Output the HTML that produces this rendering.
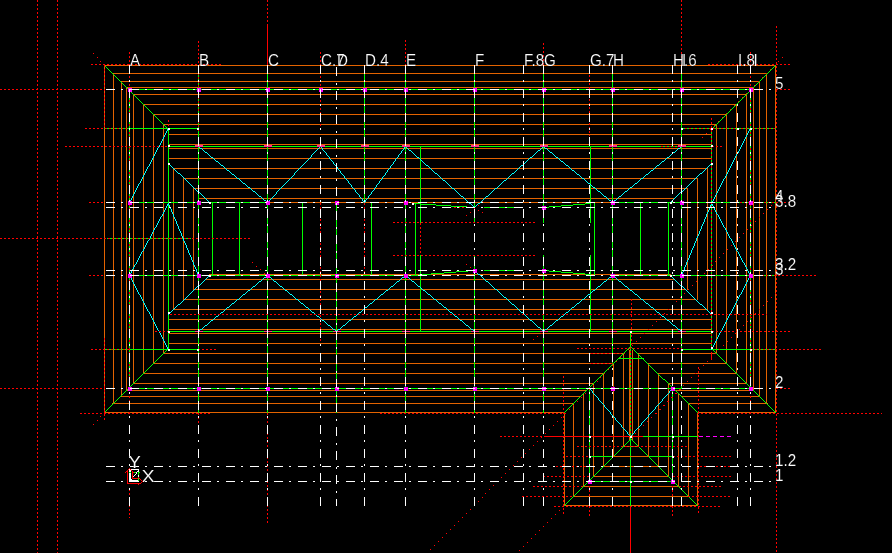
<!DOCTYPE html>
<html><head><meta charset="utf-8"><title>Roof framing plan</title>
<style>
html,body{margin:0;padding:0;background:#000;overflow:hidden}
svg{display:block}
svg line,svg path{shape-rendering:crispEdges;fill:none}
svg rect{shape-rendering:crispEdges}
svg text{font-family:"Liberation Sans",sans-serif;fill:#fff;stroke:#000;stroke-width:.15px}
#grid,#ucs{opacity:.999}
</style></head><body>
<svg width="892" height="553" viewBox="0 0 892 553">
<rect width="892" height="553" fill="#000"/>
<g id="rafters">
<line x1="104" y1="65.5" x2="776" y2="65.5" stroke="#e36300"/>
<line x1="104" y1="412.5" x2="565" y2="412.5" stroke="#e36300"/>
<line x1="697" y1="412.5" x2="776" y2="412.5" stroke="#e36300"/>
<line x1="112" y1="73.5" x2="768" y2="73.5" stroke="#e36300"/>
<line x1="112" y1="403.5" x2="574" y2="403.5" stroke="#e36300"/>
<line x1="688" y1="403.5" x2="768" y2="403.5" stroke="#e36300"/>
<line x1="120" y1="81.5" x2="760" y2="81.5" stroke="#e36300"/>
<line x1="120" y1="396.5" x2="581" y2="396.5" stroke="#e36300"/>
<line x1="681" y1="396.5" x2="760" y2="396.5" stroke="#e36300"/>
<line x1="126" y1="87.5" x2="754" y2="87.5" stroke="#e36300"/>
<line x1="126" y1="390.5" x2="587" y2="390.5" stroke="#e36300"/>
<line x1="675" y1="390.5" x2="754" y2="390.5" stroke="#e36300"/>
<line x1="133" y1="94.5" x2="747" y2="94.5" stroke="#e36300"/>
<line x1="133" y1="383.5" x2="594" y2="383.5" stroke="#e36300"/>
<line x1="668" y1="383.5" x2="747" y2="383.5" stroke="#e36300"/>
<line x1="143" y1="104.5" x2="737" y2="104.5" stroke="#e36300"/>
<line x1="143" y1="373.5" x2="604" y2="373.5" stroke="#e36300"/>
<line x1="658" y1="373.5" x2="737" y2="373.5" stroke="#e36300"/>
<line x1="153" y1="114.5" x2="727" y2="114.5" stroke="#e36300"/>
<line x1="153" y1="363.5" x2="614" y2="363.5" stroke="#e36300"/>
<line x1="648" y1="363.5" x2="727" y2="363.5" stroke="#e36300"/>
<line x1="163" y1="124.5" x2="717" y2="124.5" stroke="#e36300"/>
<line x1="163" y1="353.5" x2="624" y2="353.5" stroke="#e36300"/>
<line x1="638" y1="353.5" x2="717" y2="353.5" stroke="#e36300"/>
<line x1="168" y1="134.5" x2="712" y2="134.5" stroke="#e36300"/>
<line x1="168" y1="343.5" x2="712" y2="343.5" stroke="#e36300"/>
<line x1="168" y1="144.5" x2="712" y2="144.5" stroke="#e36300"/>
<line x1="168" y1="333.5" x2="712" y2="333.5" stroke="#e36300"/>
<line x1="168" y1="148.5" x2="712" y2="148.5" stroke="#e36300"/>
<line x1="168" y1="329.5" x2="712" y2="329.5" stroke="#e36300"/>
<line x1="168" y1="158.5" x2="712" y2="158.5" stroke="#e36300"/>
<line x1="168" y1="319.5" x2="712" y2="319.5" stroke="#e36300"/>
<line x1="173" y1="168.5" x2="708" y2="168.5" stroke="#e36300"/>
<line x1="173" y1="309.5" x2="707" y2="309.5" stroke="#e36300"/>
<line x1="183" y1="178.5" x2="698" y2="178.5" stroke="#e36300"/>
<line x1="184" y1="299.5" x2="696" y2="299.5" stroke="#e36300"/>
<line x1="193" y1="188.5" x2="688" y2="188.5" stroke="#e36300"/>
<line x1="195" y1="289.5" x2="685" y2="289.5" stroke="#e36300"/>
<line x1="198" y1="198.5" x2="674" y2="198.5" stroke="#e36300"/>
<line x1="206" y1="279.5" x2="674" y2="279.5" stroke="#e36300"/>
<line x1="209" y1="202.5" x2="671" y2="202.5" stroke="#e36300"/>
<line x1="209" y1="274.5" x2="671" y2="274.5" stroke="#e36300"/>
<line x1="104.5" y1="65" x2="104.5" y2="413" stroke="#e36300"/>
<line x1="775.5" y1="65" x2="775.5" y2="413" stroke="#e36300"/>
<line x1="113.5" y1="74" x2="113.5" y2="404" stroke="#e36300"/>
<line x1="766.5" y1="74" x2="766.5" y2="404" stroke="#e36300"/>
<line x1="121.5" y1="82" x2="121.5" y2="396" stroke="#e36300"/>
<line x1="759.5" y1="82" x2="759.5" y2="396" stroke="#e36300"/>
<line x1="126.5" y1="87" x2="126.5" y2="391" stroke="#e36300"/>
<line x1="753.5" y1="87" x2="753.5" y2="391" stroke="#e36300"/>
<line x1="133.5" y1="94" x2="133.5" y2="384" stroke="#e36300"/>
<line x1="746.5" y1="94" x2="746.5" y2="384" stroke="#e36300"/>
<line x1="143.5" y1="104" x2="143.5" y2="374" stroke="#e36300"/>
<line x1="736.5" y1="104" x2="736.5" y2="374" stroke="#e36300"/>
<line x1="153.5" y1="114" x2="153.5" y2="364" stroke="#e36300"/>
<line x1="726.5" y1="114" x2="726.5" y2="364" stroke="#e36300"/>
<line x1="163.5" y1="124" x2="163.5" y2="354" stroke="#e36300"/>
<line x1="716.5" y1="124" x2="716.5" y2="354" stroke="#e36300"/>
<line x1="173.5" y1="168" x2="173.5" y2="310" stroke="#e36300"/>
<line x1="707.5" y1="168" x2="707.5" y2="310" stroke="#e36300"/>
<line x1="183.5" y1="178" x2="183.5" y2="300" stroke="#e36300"/>
<line x1="697.5" y1="178" x2="697.5" y2="300" stroke="#e36300"/>
<line x1="193.5" y1="188" x2="193.5" y2="290" stroke="#e36300"/>
<line x1="687.5" y1="188" x2="687.5" y2="290" stroke="#e36300"/>
<line x1="573.5" y1="403" x2="573.5" y2="497" stroke="#e36300"/>
<line x1="583.5" y1="393" x2="583.5" y2="487" stroke="#e36300"/>
<line x1="593.5" y1="383" x2="593.5" y2="477" stroke="#e36300"/>
<line x1="603.5" y1="373" x2="603.5" y2="467" stroke="#e36300"/>
<line x1="613.5" y1="363" x2="613.5" y2="457" stroke="#e36300"/>
<line x1="623.5" y1="353" x2="623.5" y2="447" stroke="#e36300"/>
<line x1="638.5" y1="354" x2="638.5" y2="447" stroke="#e36300"/>
<line x1="648.5" y1="364" x2="648.5" y2="457" stroke="#e36300"/>
<line x1="658.5" y1="374" x2="658.5" y2="467" stroke="#e36300"/>
<line x1="668.5" y1="384" x2="668.5" y2="477" stroke="#e36300"/>
<line x1="678.5" y1="394" x2="678.5" y2="487" stroke="#e36300"/>
<line x1="688.5" y1="404" x2="688.5" y2="497" stroke="#e36300"/>
<line x1="629.5" y1="350" x2="629.5" y2="440" stroke="#e36300"/>
<line x1="632.5" y1="350" x2="632.5" y2="440" stroke="#e36300"/>
<line x1="564.5" y1="412" x2="564.5" y2="506" stroke="#e36300"/>
<line x1="697.5" y1="412" x2="697.5" y2="506" stroke="#e36300"/>
<line x1="623" y1="446.5" x2="639" y2="446.5" stroke="#e36300"/>
<line x1="613" y1="456.5" x2="649" y2="456.5" stroke="#e36300"/>
<line x1="603" y1="466.5" x2="659" y2="466.5" stroke="#e36300"/>
<line x1="593" y1="476.5" x2="669" y2="476.5" stroke="#e36300"/>
<line x1="583" y1="486.5" x2="679" y2="486.5" stroke="#e36300"/>
<line x1="573" y1="496.5" x2="689" y2="496.5" stroke="#e36300"/>
<line x1="564" y1="505.5" x2="698" y2="505.5" stroke="#e36300"/>
</g>
<g id="framing">
<path d="M104 65.5h1M105 66.5h1M106 67.5h1M107 68.5h1M108 69.5h1M109 70.5h1M110 71.5h1M111 72.5h1M112 73.5h1M113 74.5h1M114 75.5h1M115 76.5h1M116 77.5h1M117 78.5h1M118 79.5h1M119 80.5h1M120 81.5h1M121 82.5h1M122 83.5h1M123 84.5h1M124 85.5h1M125 86.5h1M126 87.5h1M127 88.5h1M128 89.5h1M129 90.5h1M130 91.5h1M131 92.5h1M132 93.5h1M133 94.5h1M134 95.5h1M135 96.5h1M136 97.5h1M137 98.5h1M138 99.5h1M139 100.5h1M140 101.5h1M141 102.5h1M142 103.5h1M143 104.5h1M144 105.5h1M145 106.5h1M146 107.5h1M147 108.5h1M148 109.5h1M149 110.5h1M150 111.5h1M151 112.5h1M152 113.5h1M153 114.5h1M154 115.5h1M155 116.5h1M156 117.5h1M157 118.5h1M158 119.5h1M159 120.5h1M160 121.5h1M161 122.5h1M162 123.5h1M163 124.5h1M164 125.5h1M165 126.5h1M166 127.5h1M167 128.5h1" stroke="#00ff00"/>
<path d="M775 65.5h1M774 66.5h1M773 67.5h1M772 68.5h1M771 69.5h1M770 70.5h1M769 71.5h1M768 72.5h1M767 73.5h1M766 74.5h1M765 75.5h1M764 76.5h1M763 77.5h1M762 78.5h1M761 79.5h1M760 80.5h1M759 81.5h1M758 82.5h1M757 83.5h1M756 84.5h1M755 85.5h1M754 86.5h1M753 87.5h1M752 88.5h1M751 89.5h1M750 90.5h1M749 91.5h1M748 92.5h1M747 93.5h1M746 94.5h1M745 95.5h1M744 96.5h1M743 97.5h1M742 98.5h1M741 99.5h1M740 100.5h1M739 101.5h1M738 102.5h1M737 103.5h1M736 104.5h1M735 105.5h1M734 106.5h1M733 107.5h1M732 108.5h1M731 109.5h1M730 110.5h1M729 111.5h1M728 112.5h1M727 113.5h1M726 114.5h1M725 115.5h1M724 116.5h1M723 117.5h1M722 118.5h1M721 119.5h1M720 120.5h1M719 121.5h1M718 122.5h1M717 123.5h1M716 124.5h1M715 125.5h1M714 126.5h1M713 127.5h1M712 128.5h1" stroke="#00ff00"/>
<path d="M104 412.5h1M105 411.5h1M106 410.5h1M107 409.5h1M108 408.5h1M109 407.5h1M110 406.5h1M111 405.5h1M112 404.5h1M113 403.5h1M114 402.5h1M115 401.5h1M116 400.5h1M117 399.5h1M118 398.5h1M119 397.5h1M120 396.5h1M121 395.5h1M122 394.5h1M123 393.5h1M124 392.5h1M125 391.5h1M126 390.5h1M127 389.5h1M128 388.5h1M129 387.5h1M130 386.5h1M131 385.5h1M132 384.5h1M133 383.5h1M134 382.5h1M135 381.5h1M136 380.5h1M137 379.5h1M138 378.5h1M139 377.5h1M140 376.5h1M141 375.5h1M142 374.5h1M143 373.5h1M144 372.5h1M145 371.5h1M146 370.5h1M147 369.5h1M148 368.5h1M149 367.5h1M150 366.5h1M151 365.5h1M152 364.5h1M153 363.5h1M154 362.5h1M155 361.5h1M156 360.5h1M157 359.5h1M158 358.5h1M159 357.5h1M160 356.5h1M161 355.5h1M162 354.5h1M163 353.5h1M164 352.5h1M165 351.5h1M166 350.5h1M167 349.5h1" stroke="#00ff00"/>
<path d="M775 412.5h1M774 411.5h1M773 410.5h1M772 409.5h1M771 408.5h1M770 407.5h1M769 406.5h1M768 405.5h1M767 404.5h1M766 403.5h1M765 402.5h1M764 401.5h1M763 400.5h1M762 399.5h1M761 398.5h1M760 397.5h1M759 396.5h1M758 395.5h1M757 394.5h1M756 393.5h1M755 392.5h1M754 391.5h1M753 390.5h1M752 389.5h1M751 388.5h1M750 387.5h1M749 386.5h1M748 385.5h1M747 384.5h1M746 383.5h1M745 382.5h1M744 381.5h1M743 380.5h1M742 379.5h1M741 378.5h1M740 377.5h1M739 376.5h1M738 375.5h1M737 374.5h1M736 373.5h1M735 372.5h1M734 371.5h1M733 370.5h1M732 369.5h1M731 368.5h1M730 367.5h1M729 366.5h1M728 365.5h1M727 364.5h1M726 363.5h1M725 362.5h1M724 361.5h1M723 360.5h1M722 359.5h1M721 358.5h1M720 357.5h1M719 356.5h1M718 355.5h1M717 354.5h1M716 353.5h1M715 352.5h1M714 351.5h1M713 350.5h1M712 349.5h1" stroke="#00ff00"/>
<line x1="104" y1="128.5" x2="199" y2="128.5" stroke="#00ff00"/>
<line x1="681" y1="128.5" x2="776" y2="128.5" stroke="#00ff00"/>
<line x1="104" y1="349.5" x2="199" y2="349.5" stroke="#00ff00"/>
<line x1="681" y1="349.5" x2="776" y2="349.5" stroke="#00ff00"/>
<line x1="168.5" y1="128" x2="168.5" y2="350" stroke="#00ff00"/>
<line x1="711.5" y1="128" x2="711.5" y2="350" stroke="#00ff00"/>
<line x1="168" y1="146.5" x2="712" y2="146.5" stroke="#00ff00"/>
<line x1="168" y1="331.5" x2="712" y2="331.5" stroke="#00ff00"/>
<line x1="198.5" y1="65" x2="198.5" y2="413" stroke="#00ff00"/>
<line x1="267.5" y1="65" x2="267.5" y2="413" stroke="#00ff00"/>
<line x1="405.5" y1="65" x2="405.5" y2="413" stroke="#00ff00"/>
<line x1="129.5" y1="89" x2="129.5" y2="389" stroke="#00ff00"/>
<line x1="750.5" y1="89" x2="750.5" y2="389" stroke="#00ff00"/>
<line x1="336.5" y1="202" x2="336.5" y2="413" stroke="#00ff00"/>
<line x1="364.5" y1="65" x2="364.5" y2="203" stroke="#00ff00"/>
<line x1="474.5" y1="65" x2="474.5" y2="223" stroke="#00ff00"/>
<line x1="474.5" y1="255" x2="474.5" y2="413" stroke="#00ff00"/>
<line x1="543.5" y1="65" x2="543.5" y2="223" stroke="#00ff00"/>
<line x1="543.5" y1="255" x2="543.5" y2="413" stroke="#00ff00"/>
<line x1="612.5" y1="65" x2="612.5" y2="366" stroke="#00ff00"/>
<line x1="681.5" y1="65" x2="681.5" y2="389" stroke="#00ff00"/>
<line x1="107" y1="238.5" x2="191" y2="238.5" stroke="#00ff00"/>
<line x1="129" y1="89.5" x2="751" y2="89.5" stroke="#00ff00"/>
<line x1="129" y1="388.5" x2="751" y2="388.5" stroke="#00ff00"/>
<line x1="129" y1="202.5" x2="268" y2="202.5" stroke="#00ff00"/>
<line x1="129" y1="275.5" x2="413" y2="275.5" stroke="#00ff00"/>
<line x1="612" y1="275.5" x2="776" y2="275.5" stroke="#00ff00"/>
<line x1="612" y1="202.5" x2="776" y2="202.5" stroke="#00ff00"/>
<line x1="484" y1="207.5" x2="515" y2="207.5" stroke="#00ff00"/>
<line x1="484" y1="270.5" x2="515" y2="270.5" stroke="#00ff00"/>
<line x1="212.5" y1="203" x2="212.5" y2="275" stroke="#00ff00"/>
<line x1="239.5" y1="203" x2="239.5" y2="275" stroke="#00ff00"/>
<line x1="302.5" y1="203" x2="302.5" y2="275" stroke="#00ff00"/>
<line x1="371.5" y1="203" x2="371.5" y2="275" stroke="#00ff00"/>
<line x1="415.5" y1="203" x2="415.5" y2="275" stroke="#00ff00"/>
<line x1="594.5" y1="203" x2="594.5" y2="275" stroke="#00ff00"/>
<line x1="640.5" y1="203" x2="640.5" y2="275" stroke="#00ff00"/>
<line x1="668.5" y1="203" x2="668.5" y2="275" stroke="#00ff00"/>
<line x1="420.5" y1="146" x2="420.5" y2="223" stroke="#00ff00"/>
<line x1="420.5" y1="255" x2="420.5" y2="332" stroke="#00ff00"/>
<line x1="590.5" y1="146" x2="590.5" y2="223" stroke="#00ff00"/>
<line x1="590.5" y1="255" x2="590.5" y2="332" stroke="#00ff00"/>
<path d="M412 203.5h8M420 204.5h16M436 205.5h15M451 206.5h16M467 207.5h8" stroke="#00ff00"/>
<path d="M543 207.5h6M549 206.5h12M561 205.5h12M573 204.5h12M585 203.5h6" stroke="#00ff00"/>
<path d="M412 275.5h7M419 274.5h12M431 273.5h13M444 272.5h12M456 271.5h12M468 270.5h7" stroke="#00ff00"/>
<path d="M543 270.5h6M549 271.5h12M561 272.5h12M573 273.5h12M585 274.5h6" stroke="#00ff00"/>
<path d="M630 346.5h1M629 347.5h1M628 348.5h1M627 349.5h1M626 350.5h1M625 351.5h1M624 352.5h1M623 353.5h1M622 354.5h1M621 355.5h1M620 356.5h1M619 357.5h1M618 358.5h1M617 359.5h1M616 360.5h1M615 361.5h1M614 362.5h1M613 363.5h1M612 364.5h1M611 365.5h1M610 366.5h1M609 367.5h1M608 368.5h1M607 369.5h1M606 370.5h1M605 371.5h1M604 372.5h1M603 373.5h1M602 374.5h1M601 375.5h1M600 376.5h1M599 377.5h1M598 378.5h1M597 379.5h1M596 380.5h1M595 381.5h1M594 382.5h1M593 383.5h1M592 384.5h1M591 385.5h1M590 386.5h1M589 387.5h1M588 388.5h1M587 389.5h1M586 390.5h1M585 391.5h1M584 392.5h1M583 393.5h1M582 394.5h1M581 395.5h1M580 396.5h1M579 397.5h1M578 398.5h1M577 399.5h1M576 400.5h1M575 401.5h1M574 402.5h1M573 403.5h1M572 404.5h1M571 405.5h1M570 406.5h1M569 407.5h1M568 408.5h1M567 409.5h1M566 410.5h1M565 411.5h1M564 412.5h1" stroke="#00ff00"/>
<path d="M630 346.5h1M631 347.5h1M632 348.5h1M633 349.5h1M634 350.5h1M635 351.5h1M636 352.5h1M637 353.5h1M638 354.5h1M639 355.5h1M640 356.5h1M641 357.5h1M642 358.5h1M643 359.5h1M644 360.5h1M645 361.5h1M646 362.5h1M647 363.5h1M648 364.5h1M649 365.5h1M650 366.5h1M651 367.5h1M652 368.5h1M653 369.5h1M654 370.5h1M655 371.5h1M656 372.5h1M657 373.5h1M658 374.5h1M659 375.5h1M660 376.5h1M661 377.5h1M662 378.5h1M663 379.5h2M665 380.5h1M666 381.5h1M667 382.5h1M668 383.5h1M669 384.5h1M670 385.5h1M671 386.5h1M672 387.5h1M673 388.5h1M674 389.5h1M675 390.5h1M676 391.5h1M677 392.5h1M678 393.5h1M679 394.5h1M680 395.5h1M681 396.5h1M682 397.5h1M683 398.5h1M684 399.5h1M685 400.5h1M686 401.5h1M687 402.5h1M688 403.5h1M689 404.5h1M690 405.5h1M691 406.5h1M692 407.5h1M693 408.5h1M694 409.5h1M695 410.5h1M696 411.5h1M697 412.5h1" stroke="#00ff00"/>
<line x1="630.5" y1="331" x2="630.5" y2="506" stroke="#00ff00"/>
<path d="M630 439.5h1M629 440.5h1M628 441.5h1M627 442.5h1M626 443.5h1M625 444.5h1M624 445.5h1M623 446.5h1M622 447.5h1M621 448.5h1M620 449.5h1M619 450.5h1M618 451.5h1M617 452.5h1M616 453.5h1M615 454.5h1M614 455.5h1M613 456.5h1M612 457.5h1M611 458.5h1M610 459.5h1M609 460.5h1M608 461.5h1M607 462.5h1M606 463.5h1M605 464.5h1M604 465.5h1M603 466.5h1M602 467.5h1M601 468.5h1M600 469.5h1M599 470.5h1M598 471.5h1M597 472.5h1M596 473.5h1M595 474.5h1M594 475.5h1M593 476.5h1M592 477.5h1M591 478.5h1M590 479.5h1M589 480.5h1M588 481.5h1M587 482.5h1M586 483.5h1M585 484.5h1M584 485.5h1M583 486.5h1M582 487.5h1M581 488.5h1M580 489.5h1M579 490.5h1M578 491.5h1M577 492.5h1M576 493.5h1M575 494.5h1M574 495.5h1M573 496.5h1M572 497.5h1M571 498.5h1M570 499.5h1M569 500.5h1M568 501.5h1M567 502.5h1M566 503.5h1M565 504.5h1M564 505.5h1" stroke="#00ff00"/>
<path d="M631 439.5h1M632 440.5h1M633 441.5h1M634 442.5h1M635 443.5h1M636 444.5h1M637 445.5h1M638 446.5h1M639 447.5h1M640 448.5h1M641 449.5h1M642 450.5h1M643 451.5h1M644 452.5h1M645 453.5h1M646 454.5h1M647 455.5h1M648 456.5h1M649 457.5h1M650 458.5h1M651 459.5h1M652 460.5h1M653 461.5h1M654 462.5h1M655 463.5h1M656 464.5h1M657 465.5h1M658 466.5h1M659 467.5h1M660 468.5h1M661 469.5h1M662 470.5h1M663 471.5h1M664 472.5h1M665 473.5h1M666 474.5h1M667 475.5h1M668 476.5h1M669 477.5h1M670 478.5h1M671 479.5h1M672 480.5h1M673 481.5h1M674 482.5h1M675 483.5h1M676 484.5h1M677 485.5h1M678 486.5h1M679 487.5h1M680 488.5h1M681 489.5h1M682 490.5h1M683 491.5h1M684 492.5h1M685 493.5h1M686 494.5h1M687 495.5h1M688 496.5h1M689 497.5h1M690 498.5h1M691 499.5h1M692 500.5h1M693 501.5h1M694 502.5h1M695 503.5h1M696 504.5h1M697 505.5h1" stroke="#00ff00"/>
<line x1="618" y1="358.5" x2="644" y2="358.5" stroke="#00ff00"/>
<line x1="589.5" y1="388" x2="589.5" y2="482" stroke="#00ff00"/>
<line x1="672.5" y1="388" x2="672.5" y2="482" stroke="#00ff00"/>
<line x1="589" y1="456.5" x2="673" y2="456.5" stroke="#00ff00"/>
<line x1="613" y1="456.5" x2="649" y2="456.5" stroke="#e36300"/>
<line x1="589" y1="481.5" x2="673" y2="481.5" stroke="#00ff00"/>
<line x1="643" y1="436.5" x2="699" y2="436.5" stroke="#00ff00"/>
</g>
<g id="bracing">
<path d="M198 146.5h1M199 147.5h1M200 148.5h2M202 149.5h1M203 150.5h1M204 151.5h1M205 152.5h2M207 153.5h1M208 154.5h1M209 155.5h1M210 156.5h1M211 157.5h2M213 158.5h1M214 159.5h1M215 160.5h1M216 161.5h2M218 162.5h1M219 163.5h1M220 164.5h1M221 165.5h2M223 166.5h1M224 167.5h1M225 168.5h1M226 169.5h1M227 170.5h2M229 171.5h1M230 172.5h1M231 173.5h1M232 174.5h2M234 175.5h1M235 176.5h1M236 177.5h1M237 178.5h2M239 179.5h1M240 180.5h1M241 181.5h1M242 182.5h1M243 183.5h2M245 184.5h1M246 185.5h1M247 186.5h1M248 187.5h2M250 188.5h1M251 189.5h1M252 190.5h1M253 191.5h2M255 192.5h1M256 193.5h1M257 194.5h1M258 195.5h1M259 196.5h2M261 197.5h1M262 198.5h1M263 199.5h1M264 200.5h2M266 201.5h1M267 202.5h1" stroke="#00ffff"/>
<path d="M267.5 202v1M268.5 201v1M269.5 200v1M270.5 199v1M271.5 198v1M272.5 197v1M273.5 196v1M274.5 195v1M275.5 194v1M276.5 192v2M277.5 191v1M278.5 190v1M279.5 189v1M280.5 188v1M281.5 187v1M282.5 186v1M283.5 185v1M284.5 184v1M285.5 183v1M286.5 182v1M287.5 181v1M288.5 180v1M289.5 179v1M290.5 178v1M291.5 177v1M292.5 176v1M293.5 175v1M294.5 173v2M295.5 172v1M296.5 171v1M297.5 170v1M298.5 169v1M299.5 168v1M300.5 167v1M301.5 166v1M302.5 165v1M303.5 164v1M304.5 163v1M305.5 162v1M306.5 161v1M307.5 160v1M308.5 159v1M309.5 158v1M310.5 157v1M311.5 155v2M312.5 154v1M313.5 153v1M314.5 152v1M315.5 151v1M316.5 150v1M317.5 149v1M318.5 148v1M319.5 147v1M320.5 146v1" stroke="#00ffff"/>
<path d="M320.5 146v1M321.5 147v1M322.5 148v2M323.5 150v1M324.5 151v1M325.5 152v1M326.5 153v2M327.5 155v1M328.5 156v1M329.5 157v2M330.5 159v1M331.5 160v1M332.5 161v1M333.5 162v2M334.5 164v1M335.5 165v1M336.5 166v1M337.5 167v2M338.5 169v1M339.5 170v1M340.5 171v2M341.5 173v1M342.5 174v1M343.5 175v1M344.5 176v2M345.5 178v1M346.5 179v1M347.5 180v1M348.5 181v2M349.5 183v1M350.5 184v1M351.5 185v2M352.5 187v1M353.5 188v1M354.5 189v1M355.5 190v2M356.5 192v1M357.5 193v1M358.5 194v1M359.5 195v2M360.5 197v1M361.5 198v1M362.5 199v2M363.5 201v1M364.5 202v1" stroke="#00ffff"/>
<path d="M364.5 202v1M365.5 200v2M366.5 199v1M367.5 198v1M368.5 196v2M369.5 195v1M370.5 194v1M371.5 192v2M372.5 191v1M373.5 190v1M374.5 188v2M375.5 187v1M376.5 185v2M377.5 184v1M378.5 183v1M379.5 181v2M380.5 180v1M381.5 179v1M382.5 177v2M383.5 176v1M384.5 175v1M385.5 173v2M386.5 172v1M387.5 170v2M388.5 169v1M389.5 168v1M390.5 166v2M391.5 165v1M392.5 164v1M393.5 162v2M394.5 161v1M395.5 159v2M396.5 158v1M397.5 157v1M398.5 155v2M399.5 154v1M400.5 153v1M401.5 151v2M402.5 150v1M403.5 149v1M404.5 147v2M405.5 146v1" stroke="#00ffff"/>
<path d="M405 146.5h1M406 147.5h1M407 148.5h1M408 149.5h1M409 150.5h2M411 151.5h1M412 152.5h1M413 153.5h1M414 154.5h1M415 155.5h1M416 156.5h1M417 157.5h2M419 158.5h1M420 159.5h1M421 160.5h1M422 161.5h1M423 162.5h1M424 163.5h1M425 164.5h1M426 165.5h2M428 166.5h1M429 167.5h1M430 168.5h1M431 169.5h1M432 170.5h1M433 171.5h1M434 172.5h1M435 173.5h2M437 174.5h1M438 175.5h1M439 176.5h1M440 177.5h1M441 178.5h1M442 179.5h1M443 180.5h2M445 181.5h1M446 182.5h1M447 183.5h1M448 184.5h1M449 185.5h1M450 186.5h1M451 187.5h1M452 188.5h2M454 189.5h1M455 190.5h1M456 191.5h1M457 192.5h1M458 193.5h1M459 194.5h1M460 195.5h1M461 196.5h2M463 197.5h1M464 198.5h1M465 199.5h1M466 200.5h1M467 201.5h1M468 202.5h1M469 203.5h2M471 204.5h1M472 205.5h1M473 206.5h1M474 207.5h1" stroke="#00ffff"/>
<path d="M474 207.5h1M475 206.5h1M476 205.5h1M477 204.5h1M478 203.5h2M480 202.5h1M481 201.5h1M482 200.5h1M483 199.5h1M484 198.5h1M485 197.5h1M486 196.5h2M488 195.5h1M489 194.5h1M490 193.5h1M491 192.5h1M492 191.5h1M493 190.5h1M494 189.5h1M495 188.5h2M497 187.5h1M498 186.5h1M499 185.5h1M500 184.5h1M501 183.5h1M502 182.5h1M503 181.5h1M504 180.5h2M506 179.5h1M507 178.5h1M508 177.5h1M509 176.5h1M510 175.5h1M511 174.5h1M512 173.5h2M514 172.5h1M515 171.5h1M516 170.5h1M517 169.5h1M518 168.5h1M519 167.5h1M520 166.5h1M521 165.5h2M523 164.5h1M524 163.5h1M525 162.5h1M526 161.5h1M527 160.5h1M528 159.5h1M529 158.5h1M530 157.5h2M532 156.5h1M533 155.5h1M534 154.5h1M535 153.5h1M536 152.5h1M537 151.5h1M538 150.5h2M540 149.5h1M541 148.5h1M542 147.5h1M543 146.5h1" stroke="#00ffff"/>
<path d="M543 146.5h1M544 147.5h1M545 148.5h2M547 149.5h1M548 150.5h1M549 151.5h1M550 152.5h2M552 153.5h1M553 154.5h1M554 155.5h1M555 156.5h1M556 157.5h2M558 158.5h1M559 159.5h1M560 160.5h1M561 161.5h2M563 162.5h1M564 163.5h1M565 164.5h1M566 165.5h2M568 166.5h1M569 167.5h1M570 168.5h1M571 169.5h1M572 170.5h2M574 171.5h1M575 172.5h1M576 173.5h1M577 174.5h2M579 175.5h1M580 176.5h1M581 177.5h1M582 178.5h2M584 179.5h1M585 180.5h1M586 181.5h1M587 182.5h1M588 183.5h2M590 184.5h1M591 185.5h1M592 186.5h1M593 187.5h2M595 188.5h1M596 189.5h1M597 190.5h1M598 191.5h2M600 192.5h1M601 193.5h1M602 194.5h1M603 195.5h1M604 196.5h2M606 197.5h1M607 198.5h1M608 199.5h1M609 200.5h2M611 201.5h1M612 202.5h1" stroke="#00ffff"/>
<path d="M612 202.5h1M613 201.5h1M614 200.5h2M616 199.5h1M617 198.5h1M618 197.5h1M619 196.5h2M621 195.5h1M622 194.5h1M623 193.5h1M624 192.5h1M625 191.5h2M627 190.5h1M628 189.5h1M629 188.5h1M630 187.5h2M632 186.5h1M633 185.5h1M634 184.5h1M635 183.5h2M637 182.5h1M638 181.5h1M639 180.5h1M640 179.5h1M641 178.5h2M643 177.5h1M644 176.5h1M645 175.5h1M646 174.5h2M648 173.5h1M649 172.5h1M650 171.5h1M651 170.5h2M653 169.5h1M654 168.5h1M655 167.5h1M656 166.5h1M657 165.5h2M659 164.5h1M660 163.5h1M661 162.5h1M662 161.5h2M664 160.5h1M665 159.5h1M666 158.5h1M667 157.5h2M669 156.5h1M670 155.5h1M671 154.5h1M672 153.5h1M673 152.5h2M675 151.5h1M676 150.5h1M677 149.5h1M678 148.5h2M680 147.5h1M681 146.5h1" stroke="#00ffff"/>
<path d="M198 331.5h1M199 330.5h1M200 329.5h2M202 328.5h1M203 327.5h1M204 326.5h1M205 325.5h2M207 324.5h1M208 323.5h1M209 322.5h1M210 321.5h1M211 320.5h2M213 319.5h1M214 318.5h1M215 317.5h1M216 316.5h2M218 315.5h1M219 314.5h1M220 313.5h1M221 312.5h2M223 311.5h1M224 310.5h1M225 309.5h1M226 308.5h1M227 307.5h2M229 306.5h1M230 305.5h1M231 304.5h1M232 303.5h2M234 302.5h1M235 301.5h1M236 300.5h1M237 299.5h2M239 298.5h1M240 297.5h1M241 296.5h1M242 295.5h1M243 294.5h2M245 293.5h1M246 292.5h1M247 291.5h1M248 290.5h2M250 289.5h1M251 288.5h1M252 287.5h1M253 286.5h2M255 285.5h1M256 284.5h1M257 283.5h1M258 282.5h1M259 281.5h2M261 280.5h1M262 279.5h1M263 278.5h1M264 277.5h2M266 276.5h1M267 275.5h1" stroke="#00ffff"/>
<path d="M267 275.5h1M268 276.5h1M269 277.5h2M271 278.5h1M272 279.5h1M273 280.5h1M274 281.5h2M276 282.5h1M277 283.5h1M278 284.5h1M279 285.5h1M280 286.5h2M282 287.5h1M283 288.5h1M284 289.5h1M285 290.5h2M287 291.5h1M288 292.5h1M289 293.5h1M290 294.5h2M292 295.5h1M293 296.5h1M294 297.5h1M295 298.5h1M296 299.5h2M298 300.5h1M299 301.5h1M300 302.5h1M301 303.5h2M303 304.5h1M304 305.5h1M305 306.5h1M306 307.5h2M308 308.5h1M309 309.5h1M310 310.5h1M311 311.5h1M312 312.5h2M314 313.5h1M315 314.5h1M316 315.5h1M317 316.5h2M319 317.5h1M320 318.5h1M321 319.5h1M322 320.5h2M324 321.5h1M325 322.5h1M326 323.5h1M327 324.5h1M328 325.5h2M330 326.5h1M331 327.5h1M332 328.5h1M333 329.5h2M335 330.5h1M336 331.5h1" stroke="#00ffff"/>
<path d="M336 331.5h1M337 330.5h1M338 329.5h2M340 328.5h1M341 327.5h1M342 326.5h1M343 325.5h2M345 324.5h1M346 323.5h1M347 322.5h1M348 321.5h1M349 320.5h2M351 319.5h1M352 318.5h1M353 317.5h1M354 316.5h2M356 315.5h1M357 314.5h1M358 313.5h1M359 312.5h2M361 311.5h1M362 310.5h1M363 309.5h1M364 308.5h1M365 307.5h2M367 306.5h1M368 305.5h1M369 304.5h1M370 303.5h2M372 302.5h1M373 301.5h1M374 300.5h1M375 299.5h2M377 298.5h1M378 297.5h1M379 296.5h1M380 295.5h1M381 294.5h2M383 293.5h1M384 292.5h1M385 291.5h1M386 290.5h2M388 289.5h1M389 288.5h1M390 287.5h1M391 286.5h2M393 285.5h1M394 284.5h1M395 283.5h1M396 282.5h1M397 281.5h2M399 280.5h1M400 279.5h1M401 278.5h1M402 277.5h2M404 276.5h1M405 275.5h1" stroke="#00ffff"/>
<path d="M405 275.5h1M406 276.5h1M407 277.5h2M409 278.5h1M410 279.5h1M411 280.5h1M412 281.5h2M414 282.5h1M415 283.5h1M416 284.5h1M417 285.5h1M418 286.5h2M420 287.5h1M421 288.5h1M422 289.5h1M423 290.5h2M425 291.5h1M426 292.5h1M427 293.5h1M428 294.5h2M430 295.5h1M431 296.5h1M432 297.5h1M433 298.5h1M434 299.5h2M436 300.5h1M437 301.5h1M438 302.5h1M439 303.5h2M441 304.5h1M442 305.5h1M443 306.5h1M444 307.5h2M446 308.5h1M447 309.5h1M448 310.5h1M449 311.5h1M450 312.5h2M452 313.5h1M453 314.5h1M454 315.5h1M455 316.5h2M457 317.5h1M458 318.5h1M459 319.5h1M460 320.5h2M462 321.5h1M463 322.5h1M464 323.5h1M465 324.5h1M466 325.5h2M468 326.5h1M469 327.5h1M470 328.5h1M471 329.5h2M473 330.5h1M474 331.5h1" stroke="#00ffff"/>
<path d="M474 270.5h1M475 271.5h1M476 272.5h1M477 273.5h1M478 274.5h2M480 275.5h1M481 276.5h1M482 277.5h1M483 278.5h1M484 279.5h1M485 280.5h1M486 281.5h2M488 282.5h1M489 283.5h1M490 284.5h1M491 285.5h1M492 286.5h1M493 287.5h1M494 288.5h1M495 289.5h2M497 290.5h1M498 291.5h1M499 292.5h1M500 293.5h1M501 294.5h1M502 295.5h1M503 296.5h1M504 297.5h2M506 298.5h1M507 299.5h1M508 300.5h1M509 301.5h1M510 302.5h1M511 303.5h1M512 304.5h2M514 305.5h1M515 306.5h1M516 307.5h1M517 308.5h1M518 309.5h1M519 310.5h1M520 311.5h1M521 312.5h2M523 313.5h1M524 314.5h1M525 315.5h1M526 316.5h1M527 317.5h1M528 318.5h1M529 319.5h1M530 320.5h2M532 321.5h1M533 322.5h1M534 323.5h1M535 324.5h1M536 325.5h1M537 326.5h1M538 327.5h2M540 328.5h1M541 329.5h1M542 330.5h1M543 331.5h1" stroke="#00ffff"/>
<path d="M543 331.5h1M544 330.5h1M545 329.5h2M547 328.5h1M548 327.5h1M549 326.5h1M550 325.5h2M552 324.5h1M553 323.5h1M554 322.5h1M555 321.5h1M556 320.5h2M558 319.5h1M559 318.5h1M560 317.5h1M561 316.5h2M563 315.5h1M564 314.5h1M565 313.5h1M566 312.5h2M568 311.5h1M569 310.5h1M570 309.5h1M571 308.5h1M572 307.5h2M574 306.5h1M575 305.5h1M576 304.5h1M577 303.5h2M579 302.5h1M580 301.5h1M581 300.5h1M582 299.5h2M584 298.5h1M585 297.5h1M586 296.5h1M587 295.5h1M588 294.5h2M590 293.5h1M591 292.5h1M592 291.5h1M593 290.5h2M595 289.5h1M596 288.5h1M597 287.5h1M598 286.5h2M600 285.5h1M601 284.5h1M602 283.5h1M603 282.5h1M604 281.5h2M606 280.5h1M607 279.5h1M608 278.5h1M609 277.5h2M611 276.5h1M612 275.5h1" stroke="#00ffff"/>
<path d="M612 275.5h1M613 276.5h1M614 277.5h2M616 278.5h1M617 279.5h1M618 280.5h1M619 281.5h2M621 282.5h1M622 283.5h1M623 284.5h1M624 285.5h1M625 286.5h2M627 287.5h1M628 288.5h1M629 289.5h1M630 290.5h2M632 291.5h1M633 292.5h1M634 293.5h1M635 294.5h2M637 295.5h1M638 296.5h1M639 297.5h1M640 298.5h1M641 299.5h2M643 300.5h1M644 301.5h1M645 302.5h1M646 303.5h2M648 304.5h1M649 305.5h1M650 306.5h1M651 307.5h2M653 308.5h1M654 309.5h1M655 310.5h1M656 311.5h1M657 312.5h2M659 313.5h1M660 314.5h1M661 315.5h1M662 316.5h2M664 317.5h1M665 318.5h1M666 319.5h1M667 320.5h2M669 321.5h1M670 322.5h1M671 323.5h1M672 324.5h1M673 325.5h2M675 326.5h1M676 327.5h1M677 328.5h1M678 329.5h2M680 330.5h1M681 331.5h1" stroke="#00ffff"/>
<path d="M168.5 128v1M167.5 129v2M166.5 131v2M165.5 133v2M164.5 135v2M163.5 137v2M162.5 139v2M161.5 141v2M160.5 143v2M159.5 145v2M158.5 147v1M157.5 148v2M156.5 150v2M155.5 152v2M154.5 154v2M153.5 156v2M152.5 158v2M151.5 160v2M150.5 162v2M149.5 164v2M148.5 166v1M147.5 167v2M146.5 169v2M145.5 171v2M144.5 173v2M143.5 175v2M142.5 177v2M141.5 179v2M140.5 181v2M139.5 183v1M138.5 184v2M137.5 186v2M136.5 188v2M135.5 190v2M134.5 192v2M133.5 194v2M132.5 196v2M131.5 198v2M130.5 200v2M129.5 202v1" stroke="#00ffff"/>
<path d="M168.5 203v1M167.5 204v2M166.5 206v2M165.5 208v2M164.5 210v2M163.5 212v2M162.5 214v2M161.5 216v1M160.5 217v2M159.5 219v2M158.5 221v2M157.5 223v2M156.5 225v2M155.5 227v1M154.5 228v2M153.5 230v2M152.5 232v2M151.5 234v2M150.5 236v2M149.5 238v2M148.5 240v1M147.5 241v2M146.5 243v2M145.5 245v2M144.5 247v2M143.5 249v2M142.5 251v1M141.5 252v2M140.5 254v2M139.5 256v2M138.5 258v2M137.5 260v2M136.5 262v2M135.5 264v1M134.5 265v2M133.5 267v2M132.5 269v2M131.5 271v2M130.5 273v2M129.5 275v1" stroke="#00ffff"/>
<path d="M168.5 203v2M169.5 205v2M170.5 207v2M171.5 209v3M172.5 212v2M173.5 214v3M174.5 217v2M175.5 219v2M176.5 221v3M177.5 224v2M178.5 226v3M179.5 229v2M180.5 231v2M181.5 233v3M182.5 236v2M183.5 238v3M184.5 241v2M185.5 243v2M186.5 245v3M187.5 248v2M188.5 250v3M189.5 253v2M190.5 255v2M191.5 257v3M192.5 260v2M193.5 262v3M194.5 265v2M195.5 267v2M196.5 269v3M197.5 272v2M198.5 274v2" stroke="#00ffff"/>
<path d="M129.5 275v1M130.5 276v2M131.5 278v2M132.5 280v2M133.5 282v2M134.5 284v2M135.5 286v2M136.5 288v2M137.5 290v2M138.5 292v2M139.5 294v1M140.5 295v2M141.5 297v2M142.5 299v2M143.5 301v2M144.5 303v2M145.5 305v2M146.5 307v2M147.5 309v2M148.5 311v1M149.5 312v2M150.5 314v2M151.5 316v2M152.5 318v2M153.5 320v2M154.5 322v2M155.5 324v2M156.5 326v2M157.5 328v2M158.5 330v1M159.5 331v2M160.5 333v2M161.5 335v2M162.5 337v2M163.5 339v2M164.5 341v2M165.5 343v2M166.5 345v2M167.5 347v2M168.5 349v1" stroke="#00ffff"/>
<path d="M168 163.5h1M169 164.5h1M170 165.5h1M171 166.5h1M172 167.5h1M173 168.5h1M174 169.5h1M175 170.5h1M176 171.5h1M177 172.5h1M178 173.5h2M180 174.5h1M181 175.5h1M182 176.5h1M183 177.5h1M184 178.5h1M185 179.5h1M186 180.5h1M187 181.5h1M188 182.5h1M189 183.5h1M190 184.5h1M191 185.5h1M192 186.5h1M193 187.5h1M194 188.5h1M195 189.5h1M196 190.5h1M197 191.5h1M198 192.5h2M200 193.5h1M201 194.5h1M202 195.5h1M203 196.5h1M204 197.5h1M205 198.5h1M206 199.5h1M207 200.5h1M208 201.5h1M209 202.5h1" stroke="#00ffff"/>
<path d="M168 314.5h1M169 313.5h1M170 312.5h1M171 311.5h1M172 310.5h1M173 309.5h1M174 308.5h1M175 307.5h1M176 306.5h1M177 305.5h1M178 304.5h2M180 303.5h1M181 302.5h1M182 301.5h1M183 300.5h1M184 299.5h1M185 298.5h1M186 297.5h1M187 296.5h1M188 295.5h1M189 294.5h1M190 293.5h1M191 292.5h1M192 291.5h1M193 290.5h1M194 289.5h1M195 288.5h1M196 287.5h1M197 286.5h1M198 285.5h2M200 284.5h1M201 283.5h1M202 282.5h1M203 281.5h1M204 280.5h1M205 279.5h1M206 278.5h1M207 277.5h1M208 276.5h1M209 275.5h1" stroke="#00ffff"/>
<path d="M711 163.5h1M710 164.5h1M709 165.5h1M708 166.5h1M707 167.5h1M706 168.5h1M705 169.5h1M704 170.5h1M703 171.5h1M702 172.5h1M700 173.5h2M699 174.5h1M698 175.5h1M697 176.5h1M696 177.5h1M695 178.5h1M694 179.5h1M693 180.5h1M692 181.5h1M691 182.5h1M690 183.5h1M689 184.5h1M688 185.5h1M687 186.5h1M686 187.5h1M685 188.5h1M684 189.5h1M683 190.5h1M682 191.5h1M680 192.5h2M679 193.5h1M678 194.5h1M677 195.5h1M676 196.5h1M675 197.5h1M674 198.5h1M673 199.5h1M672 200.5h1M671 201.5h1M670 202.5h1" stroke="#00ffff"/>
<path d="M711 314.5h1M710 313.5h1M709 312.5h1M708 311.5h1M707 310.5h1M706 309.5h1M705 308.5h1M704 307.5h1M703 306.5h1M702 305.5h1M700 304.5h2M699 303.5h1M698 302.5h1M697 301.5h1M696 300.5h1M695 299.5h1M694 298.5h1M693 297.5h1M692 296.5h1M691 295.5h1M690 294.5h1M689 293.5h1M688 292.5h1M687 291.5h1M686 290.5h1M685 289.5h1M684 288.5h1M683 287.5h1M682 286.5h1M680 285.5h2M679 284.5h1M678 283.5h1M677 282.5h1M676 281.5h1M675 280.5h1M674 279.5h1M673 278.5h1M672 277.5h1M671 276.5h1M670 275.5h1" stroke="#00ffff"/>
<path d="M750.5 128v1M749.5 129v2M748.5 131v2M747.5 133v2M746.5 135v2M745.5 137v2M744.5 139v2M743.5 141v2M742.5 143v2M741.5 145v2M740.5 147v2M739.5 149v2M738.5 151v2M737.5 153v1M736.5 154v2M735.5 156v2M734.5 158v2M733.5 160v2M732.5 162v2M731.5 164v2M730.5 166v2M729.5 168v2M728.5 170v2M727.5 172v2M726.5 174v2M725.5 176v2M724.5 178v1M723.5 179v2M722.5 181v2M721.5 183v2M720.5 185v2M719.5 187v2M718.5 189v2M717.5 191v2M716.5 193v2M715.5 195v2M714.5 197v2M713.5 199v2M712.5 201v2M711.5 203v1" stroke="#00ffff"/>
<path d="M711.5 203v2M710.5 205v2M709.5 207v3M708.5 210v2M707.5 212v2M706.5 214v3M705.5 217v2M704.5 219v3M703.5 222v2M702.5 224v2M701.5 226v3M700.5 229v2M699.5 231v3M698.5 234v2M697.5 236v2M696.5 238v3M695.5 241v2M694.5 243v3M693.5 246v2M692.5 248v2M691.5 250v3M690.5 253v2M689.5 255v3M688.5 258v2M687.5 260v2M686.5 262v3M685.5 265v2M684.5 267v3M683.5 270v2M682.5 272v2M681.5 274v2" stroke="#00ffff"/>
<path d="M711.5 203v1M712.5 204v2M713.5 206v2M714.5 208v2M715.5 210v2M716.5 212v2M717.5 214v1M718.5 215v2M719.5 217v2M720.5 219v2M721.5 221v2M722.5 223v2M723.5 225v2M724.5 227v1M725.5 228v2M726.5 230v2M727.5 232v2M728.5 234v2M729.5 236v2M730.5 238v1M731.5 239v2M732.5 241v2M733.5 243v2M734.5 245v2M735.5 247v2M736.5 249v2M737.5 251v1M738.5 252v2M739.5 254v2M740.5 256v2M741.5 258v2M742.5 260v2M743.5 262v1M744.5 263v2M745.5 265v2M746.5 267v2M747.5 269v2M748.5 271v2M749.5 273v2M750.5 275v1" stroke="#00ffff"/>
<path d="M750.5 275v1M749.5 276v2M748.5 278v2M747.5 280v2M746.5 282v2M745.5 284v2M744.5 286v2M743.5 288v2M742.5 290v2M741.5 292v2M740.5 294v1M739.5 295v2M738.5 297v2M737.5 299v2M736.5 301v2M735.5 303v2M734.5 305v2M733.5 307v2M732.5 309v2M731.5 311v2M730.5 313v1M729.5 314v2M728.5 316v2M727.5 318v2M726.5 320v2M725.5 322v2M724.5 324v2M723.5 326v2M722.5 328v2M721.5 330v1M720.5 331v2M719.5 333v2M718.5 335v2M717.5 337v2M716.5 339v2M715.5 341v2M714.5 343v2M713.5 345v2M712.5 347v2M711.5 349v1" stroke="#00ffff"/>
<path d="M589.5 388v1M590.5 389v1M591.5 390v1M592.5 391v2M593.5 393v1M594.5 394v1M595.5 395v1M596.5 396v1M597.5 397v1M598.5 398v2M599.5 400v1M600.5 401v1M601.5 402v1M602.5 403v1M603.5 404v1M604.5 405v2M605.5 407v1M606.5 408v1M607.5 409v1M608.5 410v1M609.5 411v1M610.5 412v2M611.5 414v1M612.5 415v1M613.5 416v1M614.5 417v1M615.5 418v2M616.5 420v1M617.5 421v1M618.5 422v1M619.5 423v1M620.5 424v1M621.5 425v2M622.5 427v1M623.5 428v1M624.5 429v1M625.5 430v1M626.5 431v1M627.5 432v2M628.5 434v1M629.5 435v1M630.5 436v1" stroke="#00ffff"/>
<path d="M672.5 388v1M671.5 389v1M670.5 390v1M669.5 391v2M668.5 393v1M667.5 394v1M666.5 395v1M665.5 396v1M664.5 397v1M663.5 398v1M662.5 399v2M661.5 401v1M660.5 402v1M659.5 403v1M658.5 404v1M657.5 405v1M656.5 406v1M655.5 407v2M654.5 409v1M653.5 410v1M652.5 411v1M651.5 412v1M650.5 413v1M649.5 414v1M648.5 415v2M647.5 417v1M646.5 418v1M645.5 419v1M644.5 420v1M643.5 421v1M642.5 422v1M641.5 423v2M640.5 425v1M639.5 426v1M638.5 427v1M637.5 428v1M636.5 429v1M635.5 430v1M634.5 431v2M633.5 433v1M632.5 434v1M631.5 435v1M630.5 436v1" stroke="#00ffff"/>
</g>
<g id="construction">
<line x1="37.5" y1="0" x2="37.5" y2="553" stroke="#ff0000" stroke-dasharray="2 2"/>
<line x1="57.5" y1="0" x2="57.5" y2="553" stroke="#ff0000" stroke-dasharray="2 2"/>
<line x1="0" y1="89.5" x2="105" y2="89.5" stroke="#ff0000" stroke-dasharray="2 2"/>
<line x1="0" y1="388.5" x2="105" y2="388.5" stroke="#ff0000" stroke-dasharray="2 2"/>
<line x1="0" y1="238.5" x2="250" y2="238.5" stroke="#ff0000" stroke-dasharray="2 2"/>
<line x1="91" y1="64.5" x2="221" y2="64.5" stroke="#ff0000" stroke-dasharray="2 2"/>
<line x1="80" y1="413.5" x2="211" y2="413.5" stroke="#ff0000" stroke-dasharray="2 2"/>
<line x1="65" y1="146.5" x2="169" y2="146.5" stroke="#ff0000" stroke-dasharray="2 2"/>
<line x1="89" y1="202.5" x2="105" y2="202.5" stroke="#ff0000" stroke-dasharray="2 2"/>
<line x1="89" y1="275.5" x2="105" y2="275.5" stroke="#ff0000" stroke-dasharray="2 2"/>
<line x1="85" y1="128.5" x2="130" y2="128.5" stroke="#ff0000" stroke-dasharray="2 2"/>
<line x1="91" y1="349.5" x2="130" y2="349.5" stroke="#ff0000" stroke-dasharray="2 2"/>
<line x1="198" y1="349.5" x2="218" y2="349.5" stroke="#ff0000" stroke-dasharray="2 2"/>
<line x1="155" y1="331.5" x2="169" y2="331.5" stroke="#ff0000" stroke-dasharray="2 2"/>
<line x1="104.5" y1="65" x2="104.5" y2="129" stroke="#ff0000" stroke-dasharray="2 2"/>
<line x1="104.5" y1="338" x2="104.5" y2="421" stroke="#ff0000" stroke-dasharray="2 2"/>
<line x1="750.5" y1="52" x2="750.5" y2="413" stroke="#ff0000" stroke-dasharray="2 2"/>
<line x1="661" y1="146.5" x2="682" y2="146.5" stroke="#ff0000" stroke-dasharray="2 2"/>
<path d="M533 339.5h1M537 336.5h1M541 333.5h1" stroke="#ff0000"/>
<line x1="776.5" y1="26" x2="776.5" y2="554" stroke="#ff0000" stroke-dasharray="2 2"/>
<line x1="129.5" y1="52" x2="129.5" y2="413" stroke="#ff0000" stroke-dasharray="2 2"/>
<line x1="129.5" y1="489" x2="129.5" y2="518" stroke="#ff0000" stroke-dasharray="2 2"/>
<line x1="198.5" y1="413" x2="198.5" y2="425" stroke="#ff0000" stroke-dasharray="2 2"/>
<line x1="198.5" y1="41" x2="198.5" y2="66" stroke="#ff0000" stroke-dasharray="2 2"/>
<line x1="198.5" y1="65" x2="198.5" y2="131" stroke="#ff0000" stroke-dasharray="2 2"/>
<line x1="267.5" y1="0" x2="267.5" y2="26" stroke="#ff0000" stroke-dasharray="2 2"/>
<line x1="267.5" y1="25" x2="267.5" y2="66" stroke="#ff0000"/>
<line x1="267.5" y1="413" x2="267.5" y2="524" stroke="#ff0000" stroke-dasharray="2 2"/>
<line x1="320.5" y1="52" x2="320.5" y2="131" stroke="#ff0000" stroke-dasharray="2 2"/>
<line x1="320.5" y1="203" x2="320.5" y2="341" stroke="#ff0000" stroke-dasharray="2 2"/>
<line x1="405.5" y1="40" x2="405.5" y2="66" stroke="#ff0000" stroke-dasharray="2 2"/>
<line x1="681.5" y1="0" x2="681.5" y2="66" stroke="#ff0000" stroke-dasharray="2 2"/>
<line x1="543.5" y1="43" x2="543.5" y2="66" stroke="#ff0000" stroke-dasharray="2 2"/>
<line x1="589.5" y1="75" x2="589.5" y2="136" stroke="#ff0000" stroke-dasharray="2 2"/>
<line x1="168.5" y1="120" x2="168.5" y2="129" stroke="#ff0000" stroke-dasharray="2 2"/>
<path d="M93.5 53v1M97.5 57v1M100.5 61v1M104.5 65v1" stroke="#ff0000"/>
<path d="M93.5 424v1M97.5 420v1M100.5 416v1M104.5 412v1" stroke="#ff0000"/>
<line x1="708" y1="64.5" x2="790" y2="64.5" stroke="#ff0000" stroke-dasharray="2 2"/>
<line x1="776" y1="89.5" x2="790" y2="89.5" stroke="#ff0000" stroke-dasharray="2 2"/>
<path d="M702 137.5h1M706 133.5h1M710 129.5h1M714 125.5h1M718 121.5h1M722 117.5h1M726 113.5h1M730 109.5h1M734 105.5h1M738 101.5h1M742 97.5h1M746 93.5h1M750 89.5h1M754 85.5h1M758 81.5h1M762 77.5h1M766 73.5h1M770 69.5h1M774 65.5h1M778 61.5h1M782 57.5h1" stroke="#ff0000"/>
<line x1="711.5" y1="118" x2="711.5" y2="350" stroke="#ff0000" stroke-dasharray="2 2"/>
<line x1="712" y1="146.5" x2="723" y2="146.5" stroke="#ff0000" stroke-dasharray="2 2"/>
<line x1="681" y1="128.5" x2="776" y2="128.5" stroke="#ff0000" stroke-dasharray="2 2"/>
<path d="M426.5 553v1M430.5 549v1M434.5 545v1M438.5 541v1M442.5 537v1M446.5 533v1M450.5 529v1M454.5 525v1M458.5 521v1M462.5 517v1M466.5 513v1M470.5 509v1M474.5 505v1M478.5 501v1M482.5 497v1M485.5 493v1M489.5 489v1M493.5 485v1M497.5 481v1M501.5 477v1M505.5 473v1M509.5 469v1M513.5 465v1M517.5 461v1M521.5 457v1M525.5 453v1M529.5 449v1M533.5 445v1M537.5 441v1M541.5 437v1M545.5 433v1M549.5 429v1M553.5 425v1M557.5 421v1M561.5 417v1M565.5 413v1M569.5 409v1M573.5 405v1M577.5 401v1M581.5 397v1M585.5 393v1M589.5 389v1M593.5 385v1M597.5 381v1M600.5 377v1M604.5 373v1M608.5 369v1M612.5 365v1M616.5 361v1M620.5 357v1M624.5 353v1M628.5 349v1M632.5 345v1M636.5 341v1M640.5 337v1M644.5 333v1M648.5 329v1M652.5 325v1M656.5 321v1M660.5 317v1M664.5 313v1M668.5 309v1M672.5 305v1M676.5 301v1M680.5 297v1M684.5 293v1M688.5 289v1M692.5 285v1M696.5 281v1M700.5 277v1M704.5 273v1M708.5 269v1M712.5 265v1M715.5 261v1M719.5 257v1M723.5 253v1M727.5 249v1M731.5 245v1M735.5 241v1M739.5 237v1M743.5 233v1M747.5 229v1M751.5 225v1M755.5 221v1M759.5 217v1M763.5 213v1M767.5 209v1M771.5 205v1" stroke="#ff0000"/>
<path d="M631 437.5h1M635 433.5h1M639 429.5h1M643 425.5h1M647 421.5h1M651 417.5h1M655 413.5h1M659 409.5h1M663 405.5h1M667 401.5h1M671 397.5h1M675 393.5h1M679 389.5h1M683 385.5h1M687 381.5h1M691 377.5h1M695 373.5h1M699 369.5h1M703 365.5h1M707 361.5h1M711 357.5h1M715 353.5h1M719 349.5h1M723 345.5h1M727 341.5h1M731 337.5h1M735 333.5h1M739 329.5h1M743 325.5h1M747 321.5h1M751 317.5h1M755 313.5h1M759 309.5h1M763 305.5h1M767 301.5h1M771 297.5h1M775 293.5h1" stroke="#ff0000"/>
<path d="M656 413.5h1M660 409.5h1M664 405.5h1M668 401.5h1M672 397.5h1M676 393.5h1M680 389.5h1" stroke="#ff0000"/>
<path d="M466 215.5h1M470 212.5h1M474 208.5h1M478 205.5h1M482 201.5h1" stroke="#ff0000"/>
<path d="M474 207.5h1M478 210.5h1M482 212.5h1" stroke="#ff0000"/>
<line x1="454" y1="207.5" x2="467" y2="207.5" stroke="#ff0000" stroke-dasharray="2 2"/>
<path d="M466 264.5h1M470 267.5h1M474 270.5h1" stroke="#ff0000"/>
<path d="M252 262.5h1M256 266.5h1M260 269.5h1M264 273.5h1" stroke="#ff0000"/>
<line x1="393" y1="222.5" x2="536" y2="222.5" stroke="#ff0000" stroke-dasharray="2 2"/>
<line x1="393" y1="255.5" x2="536" y2="255.5" stroke="#ff0000" stroke-dasharray="2 2"/>
<line x1="420.5" y1="223" x2="420.5" y2="255" stroke="#ff0000" stroke-dasharray="2 2"/>
<line x1="364.5" y1="203" x2="364.5" y2="275" stroke="#ff0000" stroke-dasharray="2 2"/>
<line x1="170" y1="314.5" x2="767" y2="314.5" stroke="#ff0000" stroke-dasharray="2 2"/>
<line x1="712" y1="331.5" x2="791" y2="331.5" stroke="#ff0000" stroke-dasharray="2 2"/>
<line x1="751" y1="349.5" x2="821" y2="349.5" stroke="#ff0000" stroke-dasharray="2 2"/>
<line x1="380" y1="413.5" x2="565" y2="413.5" stroke="#ff0000" stroke-dasharray="2 2"/>
<line x1="697" y1="413.5" x2="882" y2="413.5" stroke="#ff0000" stroke-dasharray="2 2"/>
<line x1="750" y1="275.5" x2="817" y2="275.5" stroke="#ff0000" stroke-dasharray="2 2"/>
<line x1="740" y1="202.5" x2="791" y2="202.5" stroke="#ff0000" stroke-dasharray="2 2"/>
<line x1="776" y1="388.5" x2="790" y2="388.5" stroke="#ff0000" stroke-dasharray="2 2"/>
<line x1="563.5" y1="376" x2="563.5" y2="515" stroke="#ff0000" stroke-dasharray="2 2"/>
<line x1="698.5" y1="367" x2="698.5" y2="515" stroke="#ff0000" stroke-dasharray="2 2"/>
<line x1="631.5" y1="299" x2="631.5" y2="347" stroke="#ff0000" stroke-dasharray="2 2"/>
<line x1="630.5" y1="347" x2="630.5" y2="438" stroke="#ff0000" stroke-dasharray="2 2"/>
<line x1="577" y1="348.5" x2="682" y2="348.5" stroke="#ff0000" stroke-dasharray="2 2"/>
<line x1="591" y1="353.5" x2="623" y2="353.5" stroke="#ff0000" stroke-dasharray="2 2"/>
<line x1="591" y1="363.5" x2="613" y2="363.5" stroke="#ff0000" stroke-dasharray="2 2"/>
<line x1="500" y1="436.5" x2="545" y2="436.5" stroke="#ff0000" stroke-dasharray="2 2"/>
<line x1="544" y1="436.5" x2="643" y2="436.5" stroke="#ff0000"/>
<line x1="577" y1="446.5" x2="687" y2="446.5" stroke="#ff0000" stroke-dasharray="2 2"/>
<line x1="566" y1="456.5" x2="590" y2="456.5" stroke="#ff0000" stroke-dasharray="2 2"/>
<line x1="673" y1="456.5" x2="732" y2="456.5" stroke="#ff0000" stroke-dasharray="2 2"/>
<line x1="556" y1="466.5" x2="590" y2="466.5" stroke="#ff0000" stroke-dasharray="2 2"/>
<line x1="700" y1="466.5" x2="732" y2="466.5" stroke="#ff0000" stroke-dasharray="2 2"/>
<line x1="543" y1="476.5" x2="589" y2="476.5" stroke="#ff0000" stroke-dasharray="2 2"/>
<line x1="673" y1="476.5" x2="732" y2="476.5" stroke="#ff0000" stroke-dasharray="2 2"/>
<line x1="533" y1="486.5" x2="583" y2="486.5" stroke="#ff0000" stroke-dasharray="2 2"/>
<line x1="679" y1="486.5" x2="723" y2="486.5" stroke="#ff0000" stroke-dasharray="2 2"/>
<line x1="522" y1="496.5" x2="574" y2="496.5" stroke="#ff0000" stroke-dasharray="2 2"/>
<line x1="688" y1="496.5" x2="732" y2="496.5" stroke="#ff0000" stroke-dasharray="2 2"/>
<line x1="554" y1="506.5" x2="721" y2="506.5" stroke="#ff0000" stroke-dasharray="2 2"/>
<line x1="589.5" y1="482" x2="589.5" y2="516" stroke="#ff0000" stroke-dasharray="2 2"/>
<line x1="672.5" y1="482" x2="672.5" y2="516" stroke="#ff0000" stroke-dasharray="2 2"/>
<line x1="630.5" y1="506" x2="630.5" y2="553" stroke="#ff0000"/>
<path d="M563 506.5h1M559 510.5h1M555 514.5h1M551 518.5h1M547 522.5h1M543 526.5h1M539 530.5h1M535 534.5h1M531 538.5h1M527 542.5h1M523 546.5h1M519 550.5h1" stroke="#ff0000"/>
<line x1="699" y1="436.5" x2="732" y2="436.5" stroke="#ff00ff" stroke-dasharray="4 3"/>
<line x1="711.5" y1="352" x2="711.5" y2="360" stroke="#ff0000"/>
</g>
<g id="nodes">
<rect x="128" y="88" width="4" height="4" fill="#ff00ff"/>
<rect x="197" y="88" width="4" height="4" fill="#ff00ff"/>
<rect x="266" y="88" width="4" height="4" fill="#ff00ff"/>
<rect x="319" y="88" width="4" height="4" fill="#ff00ff"/>
<rect x="363" y="88" width="4" height="4" fill="#ff00ff"/>
<rect x="404" y="88" width="4" height="4" fill="#ff00ff"/>
<rect x="473" y="88" width="4" height="4" fill="#ff00ff"/>
<rect x="542" y="88" width="4" height="4" fill="#ff00ff"/>
<rect x="611" y="88" width="4" height="4" fill="#ff00ff"/>
<rect x="680" y="88" width="4" height="4" fill="#ff00ff"/>
<rect x="749" y="88" width="4" height="4" fill="#ff00ff"/>
<rect x="128" y="387" width="4" height="4" fill="#ff00ff"/>
<rect x="197" y="387" width="4" height="4" fill="#ff00ff"/>
<rect x="266" y="387" width="4" height="4" fill="#ff00ff"/>
<rect x="335" y="387" width="4" height="4" fill="#ff00ff"/>
<rect x="404" y="387" width="4" height="4" fill="#ff00ff"/>
<rect x="473" y="387" width="4" height="4" fill="#ff00ff"/>
<rect x="542" y="387" width="4" height="4" fill="#ff00ff"/>
<rect x="611" y="387" width="4" height="4" fill="#ff00ff"/>
<rect x="749" y="387" width="4" height="4" fill="#ff00ff"/>
<rect x="128" y="201" width="4" height="4" fill="#ff00ff"/>
<rect x="197" y="201" width="4" height="4" fill="#ff00ff"/>
<rect x="266" y="201" width="4" height="4" fill="#ff00ff"/>
<rect x="335" y="201" width="4" height="4" fill="#ff00ff"/>
<rect x="404" y="201" width="4" height="4" fill="#ff00ff"/>
<rect x="611" y="201" width="4" height="4" fill="#ff00ff"/>
<rect x="680" y="201" width="4" height="4" fill="#ff00ff"/>
<rect x="749" y="201" width="4" height="4" fill="#ff00ff"/>
<rect x="542" y="206" width="4" height="4" fill="#ff00ff"/>
<rect x="128" y="274" width="4" height="4" fill="#ff00ff"/>
<rect x="197" y="274" width="4" height="4" fill="#ff00ff"/>
<rect x="266" y="274" width="4" height="4" fill="#ff00ff"/>
<rect x="335" y="274" width="4" height="4" fill="#ff00ff"/>
<rect x="404" y="274" width="4" height="4" fill="#ff00ff"/>
<rect x="611" y="274" width="4" height="4" fill="#ff00ff"/>
<rect x="680" y="274" width="4" height="4" fill="#ff00ff"/>
<rect x="749" y="274" width="4" height="4" fill="#ff00ff"/>
<rect x="473" y="269" width="4" height="4" fill="#ff00ff"/>
<rect x="542" y="269" width="4" height="4" fill="#ff00ff"/>
<rect x="671" y="387" width="4" height="4" fill="#ff00ff"/>
<rect x="588" y="480" width="4" height="4" fill="#ff00ff"/>
<rect x="671" y="480" width="4" height="4" fill="#ff00ff"/>
<rect x="195" y="145" width="8" height="2" fill="#ff3090"/>
<rect x="264" y="145" width="8" height="2" fill="#ff3090"/>
<rect x="317" y="145" width="8" height="2" fill="#ff3090"/>
<rect x="361" y="145" width="8" height="2" fill="#ff3090"/>
<rect x="402" y="145" width="8" height="2" fill="#ff3090"/>
<rect x="471" y="145" width="8" height="2" fill="#ff3090"/>
<rect x="540" y="145" width="8" height="2" fill="#ff3090"/>
<rect x="609" y="145" width="8" height="2" fill="#ff3090"/>
<rect x="678" y="145" width="8" height="2" fill="#ff3090"/>
<rect x="195" y="331" width="8" height="1" fill="#ff3090"/>
<rect x="264" y="331" width="8" height="1" fill="#ff3090"/>
<rect x="333" y="331" width="8" height="1" fill="#ff3090"/>
<rect x="402" y="331" width="8" height="1" fill="#ff3090"/>
<rect x="471" y="331" width="8" height="1" fill="#ff3090"/>
<rect x="540" y="331" width="8" height="1" fill="#ff3090"/>
<rect x="609" y="331" width="8" height="1" fill="#ff3090"/>
<rect x="678" y="331" width="8" height="1" fill="#ff3090"/>
</g>
<g id="ends">
<rect x="710.5" y="127.5" width="2" height="2" fill="#ffffff"/>
<rect x="736.5" y="127.5" width="2" height="2" fill="#ffffff"/>
<rect x="749.5" y="127.5" width="2" height="2" fill="#ffffff"/>
<rect x="680.5" y="127.5" width="2" height="2" fill="#ffffff"/>
<rect x="710.5" y="144.5" width="2" height="2" fill="#ffffff"/>
<rect x="710.5" y="162.5" width="2" height="2" fill="#ffffff"/>
<rect x="167.5" y="127.5" width="2" height="2" fill="#ffffff"/>
<rect x="196.5" y="127.5" width="2" height="2" fill="#ffffff"/>
<rect x="167.5" y="144.5" width="2" height="2" fill="#ffffff"/>
<rect x="167.5" y="162.5" width="2" height="2" fill="#ffffff"/>
<rect x="710.5" y="346.5" width="2" height="2" fill="#ffffff"/>
<rect x="680.5" y="348.5" width="2" height="2" fill="#ffffff"/>
<rect x="749.5" y="348.5" width="2" height="2" fill="#ffffff"/>
<rect x="710.5" y="311.5" width="2" height="2" fill="#ffffff"/>
<rect x="710.5" y="330.5" width="2" height="2" fill="#ffffff"/>
<rect x="167.5" y="348.5" width="2" height="2" fill="#ffffff"/>
<rect x="167.5" y="311.5" width="2" height="2" fill="#ffffff"/>
<rect x="167.5" y="330.5" width="2" height="2" fill="#ffffff"/>
<rect x="196.5" y="348.5" width="2" height="2" fill="#ffffff"/>
<rect x="629.5" y="330.5" width="2" height="2" fill="#ffffff"/>
<rect x="629.5" y="435.5" width="2" height="2" fill="#ffffff"/>
<rect x="671.5" y="435.5" width="2" height="2" fill="#ffffff"/>
<rect x="588.5" y="435.5" width="2" height="2" fill="#ffffff"/>
<rect x="588.5" y="455.5" width="2" height="2" fill="#ffffff"/>
<rect x="671.5" y="455.5" width="2" height="2" fill="#ffffff"/>
<rect x="629.5" y="480.5" width="2" height="2" fill="#ffffff"/>
<rect x="208.5" y="201.5" width="2" height="2" fill="#ffffff"/>
<rect x="669.5" y="201.5" width="2" height="2" fill="#ffffff"/>
<rect x="208.5" y="274.5" width="2" height="2" fill="#ffffff"/>
<rect x="669.5" y="274.5" width="2" height="2" fill="#ffffff"/>
<rect x="411.5" y="202.5" width="2" height="2" fill="#ffffff"/>
<rect x="419.5" y="273.5" width="2" height="2" fill="#ffffff"/>
</g>
<g id="grid">
<line x1="129.5" y1="64.5" x2="129.5" y2="505.5" stroke="#ffffff" stroke-dasharray="9 6.5 2 6.5"/>
<text transform="translate(130 66) scale(0.95 1)" font-size="16">A</text>
<line x1="198.5" y1="64.5" x2="198.5" y2="505.5" stroke="#ffffff" stroke-dasharray="9 6.5 2 6.5"/>
<text transform="translate(199 66) scale(0.95 1)" font-size="16">B</text>
<line x1="267.5" y1="64.5" x2="267.5" y2="505.5" stroke="#ffffff" stroke-dasharray="9 6.5 2 6.5"/>
<text transform="translate(268 66) scale(0.95 1)" font-size="16">C</text>
<line x1="320.5" y1="64.5" x2="320.5" y2="505.5" stroke="#ffffff" stroke-dasharray="9 6.5 2 6.5"/>
<text transform="translate(321 66) scale(0.95 1)" font-size="16">C.7</text>
<line x1="336.5" y1="67" x2="336.5" y2="505.5" stroke="#ffffff" stroke-dasharray="9 6.5 2 6.5"/>
<text transform="translate(337 66) scale(0.95 1)" font-size="16">D</text>
<line x1="364.5" y1="64.5" x2="364.5" y2="505.5" stroke="#ffffff" stroke-dasharray="9 6.5 2 6.5"/>
<text transform="translate(365 66) scale(0.95 1)" font-size="16">D.4</text>
<line x1="405.5" y1="64.5" x2="405.5" y2="505.5" stroke="#ffffff" stroke-dasharray="9 6.5 2 6.5"/>
<text transform="translate(406 66) scale(0.95 1)" font-size="16">E</text>
<line x1="474.5" y1="64.5" x2="474.5" y2="505.5" stroke="#ffffff" stroke-dasharray="9 6.5 2 6.5"/>
<text transform="translate(475 66) scale(0.95 1)" font-size="16">F</text>
<line x1="523.5" y1="64.5" x2="523.5" y2="505.5" stroke="#ffffff" stroke-dasharray="9 6.5 2 6.5"/>
<text transform="translate(524 66) scale(0.95 1)" font-size="16">F.8</text>
<line x1="543.5" y1="64.5" x2="543.5" y2="505.5" stroke="#ffffff" stroke-dasharray="9 6.5 2 6.5"/>
<text transform="translate(544 66) scale(0.95 1)" font-size="16">G</text>
<line x1="589.5" y1="64.5" x2="589.5" y2="505.5" stroke="#ffffff" stroke-dasharray="9 6.5 2 6.5"/>
<text transform="translate(590 66) scale(0.95 1)" font-size="16">G.7</text>
<line x1="612.5" y1="64.5" x2="612.5" y2="505.5" stroke="#ffffff" stroke-dasharray="9 6.5 2 6.5"/>
<text transform="translate(613 66) scale(0.95 1)" font-size="16">H</text>
<line x1="672.5" y1="64.5" x2="672.5" y2="505.5" stroke="#ffffff" stroke-dasharray="9 6.5 2 6.5"/>
<text transform="translate(673 66) scale(0.95 1)" font-size="16">H.6</text>
<line x1="681.5" y1="64.5" x2="681.5" y2="505.5" stroke="#ffffff" stroke-dasharray="9 6.5 2 6.5"/>
<text transform="translate(682 66) scale(0.95 1)" font-size="16">I</text>
<line x1="737.5" y1="64.5" x2="737.5" y2="505.5" stroke="#ffffff" stroke-dasharray="9 6.5 2 6.5"/>
<text transform="translate(738 66) scale(0.95 1)" font-size="16">I.8</text>
<line x1="750.5" y1="64.5" x2="750.5" y2="505.5" stroke="#ffffff" stroke-dasharray="9 6.5 2 6.5"/>
<text transform="translate(753.5 66) scale(0.95 1)" font-size="16">I</text>
<line x1="105.75" y1="89.5" x2="772" y2="89.5" stroke="#ffffff" stroke-dasharray="9 6.5 2 6.5"/>
<text transform="translate(775 89) scale(0.95 1)" font-size="16">5</text>
<line x1="105.75" y1="202.5" x2="772" y2="202.5" stroke="#ffffff" stroke-dasharray="9 6.5 2 6.5"/>
<text transform="translate(775 202) scale(0.95 1)" font-size="16">4</text>
<line x1="105.75" y1="207.5" x2="772" y2="207.5" stroke="#ffffff" stroke-dasharray="9 6.5 2 6.5"/>
<text transform="translate(775 207) scale(0.95 1)" font-size="16">3.8</text>
<line x1="105.75" y1="270.5" x2="772" y2="270.5" stroke="#ffffff" stroke-dasharray="9 6.5 2 6.5"/>
<text transform="translate(775 270) scale(0.95 1)" font-size="16">3.2</text>
<line x1="105.75" y1="275.5" x2="772" y2="275.5" stroke="#ffffff" stroke-dasharray="9 6.5 2 6.5"/>
<text transform="translate(775 275) scale(0.95 1)" font-size="16">3</text>
<line x1="105.75" y1="388.5" x2="772" y2="388.5" stroke="#ffffff" stroke-dasharray="9 6.5 2 6.5"/>
<text transform="translate(775 388) scale(0.95 1)" font-size="16">2</text>
<line x1="105.75" y1="466.5" x2="772" y2="466.5" stroke="#ffffff" stroke-dasharray="9 6.5 2 6.5"/>
<text transform="translate(775 466) scale(0.95 1)" font-size="16">1.2</text>
<line x1="105.75" y1="481.5" x2="772" y2="481.5" stroke="#ffffff" stroke-dasharray="9 6.5 2 6.5"/>
<text transform="translate(775 481) scale(0.95 1)" font-size="16">1</text>
</g>
<g id="ucs">
<text transform="translate(128.5 468) scale(1.15 1)" font-size="16">Y</text>
<text transform="translate(141.5 481.5) scale(1.2 1)" font-size="16.5">X</text>
<line x1="129.5" y1="469" x2="129.5" y2="482" stroke="#ffffff"/>
<line x1="130.5" y1="469" x2="130.5" y2="482" stroke="#ffffff"/>
<line x1="129" y1="480.5" x2="139" y2="480.5" stroke="#ffffff"/>
<line x1="129" y1="481.5" x2="139" y2="481.5" stroke="#ffffff"/>
<line x1="129" y1="469.5" x2="139" y2="469.5" stroke="#ffffff"/>
<line x1="138.5" y1="469" x2="138.5" y2="482" stroke="#ffffff"/>
<path d="M130.5 480v1M131.5 479v1M132.5 477v2M133.5 476v1M134.5 475v1M135.5 474v1M136.5 472v2M137.5 471v1M138.5 470v1" stroke="#ffffff"/>
<line x1="127.5" y1="471" x2="127.5" y2="484" stroke="#ff0000"/>
<line x1="127" y1="483.5" x2="140" y2="483.5" stroke="#ff0000"/>
<path d="M125 472.5h1M126 471.5h1M127 470.5h1M128 469.5h1M129 468.5h1" stroke="#ff0000"/>
<path d="M129 468.5h1M130 469.5h1M131 470.5h1M132 471.5h1M133 472.5h1" stroke="#ff0000"/>
<path d="M138 477.5h1M139 478.5h1M140 479.5h1M141 480.5h1M142 481.5h1" stroke="#ff0000"/>
<path d="M142 481.5h1M141 482.5h1M139 483.5h2M138 484.5h1" stroke="#ff0000"/>
<line x1="132.5" y1="472" x2="132.5" y2="479" stroke="#ff0000"/>
<line x1="132" y1="478.5" x2="139" y2="478.5" stroke="#ff0000"/>
<line x1="129" y1="472.5" x2="140" y2="472.5" stroke="#00ff00" stroke-dasharray="2 3"/>
<line x1="138.5" y1="472" x2="138.5" y2="482" stroke="#00ff00" stroke-dasharray="3 3"/>
</g>
</svg>
</body></html>
